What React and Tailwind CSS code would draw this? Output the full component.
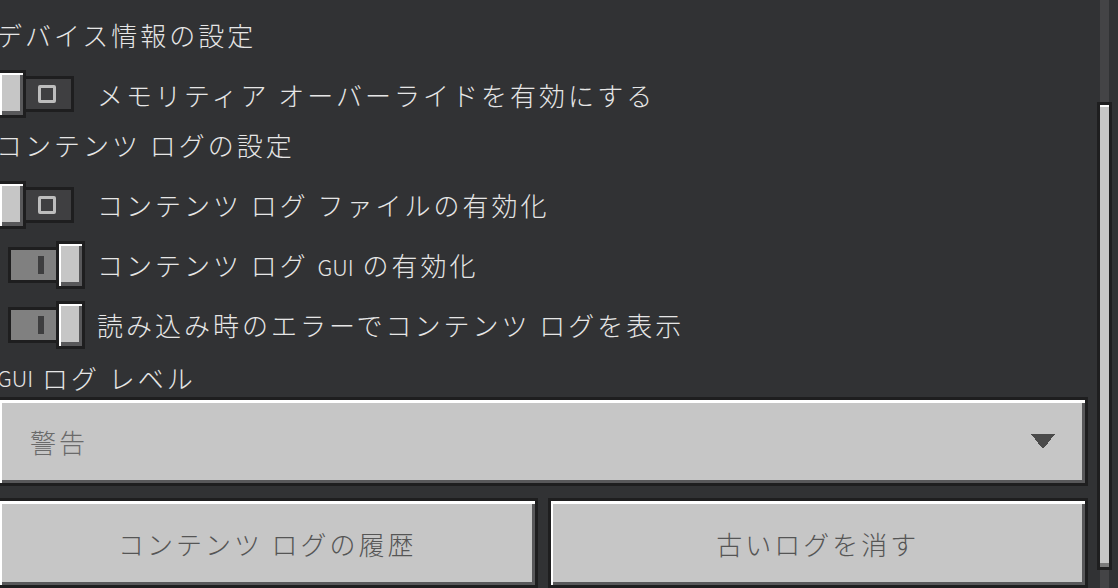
const font = { fontFamily: '"Noto Sans CJK JP", "Noto Sans", sans-serif' };

const Knob = () => (
  <div className="relative z-10 w-[29px] h-[48px] border-[3px] border-[#1e1e1f] bg-[#c6c6c6] shadow-[inset_2px_2px_0_#ffffff,inset_-3px_-4px_0_#58585a]" />
);

const Toggle = ({ on }) => (
  <div className="flex items-center w-[88px] h-[48px]">
    {on ? (
      <>
        <div className="ml-[11px] w-[51px] h-[36px] border-[3px] border-[#1e1e1f] bg-[#808080] flex items-center">
          <div className="ml-[27px] w-[6px] h-[18px] bg-[#3e3e3f]" />
        </div>
        <div className="-ml-[3px]">
          <Knob />
        </div>
      </>
    ) : (
      <>
        <Knob />
        <div className="-ml-[3px] w-[51px] h-[36px] border-[3px] border-[#1e1e1f] bg-[#3f3f41] flex items-center">
          <div className="ml-[12px] w-[18px] h-[18px] border-[3px] border-[#bdbdbd] rounded-[2px]" />
        </div>
      </>
    )}
  </div>
);

const Label = ({ children, h = "h-[50px]", mt = "" }) => (
  <div className={`${h} ${mt} flex items-center text-[26px] font-light tracking-[3px] text-[#e6e6e6] whitespace-pre`}>
    {children}
  </div>
);

const ToggleRow = ({ on, text, mt }) => (
  <div className={`${mt} h-[48px] flex items-center`}>
    <Toggle on={on} />
    <span className="ml-[12px] text-[26px] font-light tracking-[3px] text-[#e6e6e6] whitespace-pre">{text}</span>
  </div>
);

const Button = ({ children }) => (
  <div className="h-[90px] border-[3px] border-[#1e1e1f] bg-[#c6c6c6] shadow-[inset_2px_3px_0_#ffffff,inset_-3px_-3px_0_#58585a] flex items-center justify-center text-[26px] font-light tracking-[3px] text-[#555555] whitespace-pre">
    {children}
  </div>
);

export default function App() {
  return (
    <div className="w-[1118px] h-[588px] overflow-hidden bg-[#313234] flex" style={font}>
      <div className="w-[1091px] -ml-[3px] pt-[12px] flex flex-col shrink-0">
        <Label h="h-[50px] pb-[4px]">
          <span className="-ml-[1px]">デバイス情報の設定</span>
        </Label>
        <ToggleRow mt="mt-[9px]" text="メモリティア オーバーライドを有効にする" />
        <Label h="h-[50px] pb-[4px]" mt="mt-[3px]">
          <span className="-ml-[1px]">コンテンツ ログの設定</span>
        </Label>
        <ToggleRow mt="mt-[10px]" text="コンテンツ ログ ファイルの有効化" />
        <ToggleRow mt="mt-[12px]" on text={<>コンテンツ ログ <span className="text-[22px] tracking-[0px]">GUI</span> の有効化</>} />
        <ToggleRow mt="mt-[12px]" on text="読み込み時のエラーでコンテンツ ログを表示" />
        <Label h="h-[39px]" mt="mt-[9px]">
          <span className="text-[22px] tracking-[0px]">GUI</span> ログ レベル
        </Label>
        <div className="h-[90px] border-[3px] border-[#1e1e1f] bg-[#c6c6c6] shadow-[inset_2px_3px_0_#ffffff,inset_-3px_-3px_0_#58585a] flex items-center pl-[30px] pr-[30px]">
          <span className="text-[26px] font-light tracking-[3px] text-[#6a6a6a] flex-1">警告</span>
          <svg width="24" height="14" viewBox="0 0 24 14" shapeRendering="crispEdges">
            <polygon points="0,0 24,0 13,14 11,14" fill="#4a4a4a" />
          </svg>
        </div>
        <div className="mt-[12px] grid grid-cols-2 gap-[10px]">
          <Button>コンテンツ ログの履歴</Button>
          <Button>古いログを消す</Button>
        </div>
      </div>
      <div className="ml-[9px] w-[15px] h-full flex flex-col items-center shrink-0">
        <div className="w-[9px] h-[102px] bg-[#444446]" />
        <div className="w-[15px] h-[468px] border-[3px] border-[#1e1e1f] bg-[#c6c6c6] shadow-[inset_0_2px_0_#ffffff,inset_0_-4px_0_#7a7a7a]" />
        <div className="w-[9px] flex-1 bg-[#444446]" />
      </div>
    </div>
  );
}
